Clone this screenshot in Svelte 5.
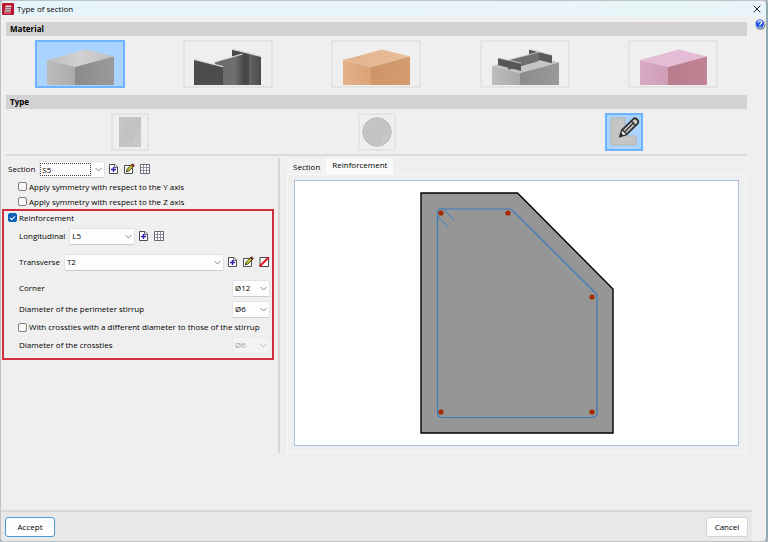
<script>
  const materials = ['Concrete', 'Steel', 'Timber', 'Composite', 'Generic'];
  const types = ['Rectangular', 'Circular', 'Custom'];

  let material = $state('Concrete');
  let type = $state('Custom');
  let tab = $state('Reinforcement');

  let section = $state('S5');
  let symmetryY = $state(false);
  let symmetryZ = $state(false);
  let reinforcement = $state(true);
  let longitudinal = $state('L5');
  let transverse = $state('T2');
  let corner = $state('Ø12');
  let perimeter = $state('Ø6');
  let crossties = $state(false);
  let crosstieDiameter = $state('Ø6');

  const diameters = ['Ø6', 'Ø8', 'Ø10', 'Ø12', 'Ø16'];
  const bars = [[146, 32], [213, 32], [297, 116], [146, 231], [297, 231]];
</script>

{#snippet chevron()}
  <svg class="chevron" width="9" height="6" viewBox="0 0 9 6" fill="none" stroke="#8a8a8a"><path d="M1.5 1l3 3 3-3" /></svg>
{/snippet}

{#snippet addIcon()}
  <button class="tool" aria-label="New">
    <svg width="10" height="12" viewBox="1 0 10 12">
      <path d="M1.5 1.5H7l2.500 2.500v6.500h-8z" fill="#fff" stroke="#4c4c4c" />
      <path d="M6.500 1.500v3h3" fill="#ddd" stroke="#4c4c4c" stroke-width=".8" />
      <path d="M5.500 4v5M3 6.500h5" stroke="#2a22b4" stroke-width="1.400" />
    </svg>
  </button>
{/snippet}

{#snippet editIcon()}
  <button class="tool" aria-label="Edit">
    <svg width="12" height="12" viewBox="0 0 12 12">
      <path d="M1.5 2.5h8v8h-8z" fill="#fff" stroke="#4c4c4c" />
      <path d="M3 5h3M3 7h2" stroke="#aaa" stroke-width=".7" />
      <path d="M3.4 8.8l.8-2.6 4.4-4.4 1.8 1.8L6 8z" fill="#c3c52b" stroke="#36360c" stroke-width=".8" />
      <path d="M8.3 2l1.4-1.4 1.8 1.8-1.4 1.4z" fill="#a0202c" stroke="#2e1212" stroke-width=".5" />
      <path d="M3.2 9l.4-1.4 1 1z" fill="#111" />
    </svg>
  </button>
{/snippet}

{#snippet tableIcon()}
  <button class="tool" aria-label="Table">
    <svg width="12" height="12" viewBox="0 0 12 12">
      <path d="M1.5 1.5h9v9h-9z" fill="#fff" stroke="#66666e" />
      <path d="M1.5 4.5h9M1.5 7.5h9M4.5 1.5v9M7.5 1.5v9" stroke="#77778a" stroke-width=".8" />
    </svg>
  </button>
{/snippet}

{#snippet helpIcon()}
  <svg width="12" height="12" viewBox="0 0 12 12">
    <circle cx="6.3" cy="6.5" r="5.2" fill="#777" />
    <circle cx="5.8" cy="5.8" r="5" fill="#dfe6f5" />
    <circle cx="5.8" cy="5.8" r="4.2" fill="#2454e0" />
    <path d="M4.1 4.6c0-2.2 3.6-2.2 3.6-.1 0 1.2-1.8 1.2-1.8 2.4M5.9 8v1.2" fill="none" stroke="#fff" stroke-width="1.3" />
  </svg>
{/snippet}

{#snippet block(left, top, right)}
  <path d="M10 18L49 7.5 77 14.5 38 25z" fill={top} />
  <path d="M10 18l28 7v18H10z" fill={left} />
  <path d="M38 25l39-10.5V43H38z" fill={right} />
{/snippet}

<div class="window">
  <header class="titlebar">
    <svg width="12" height="12" viewBox="0 0 12 12">
      <rect width="12" height="12" rx="1" fill="#b9152c" />
      <path d="M3.5 2.5h6l-1 6.5h-6z" fill="#f0dfe1" />
      <path d="M3.2 4.4h6M3 6.2h6M2.6 8h6" stroke="#713039" stroke-width=".8" />
      <path d="M2 10h7" stroke="#e9a8b0" stroke-width=".8" />
    </svg>
    <h1>Type of section</h1>
    <button class="close" aria-label="Close">
      <svg width="8" height="8" viewBox="0 0 8 8" stroke="#222" stroke-width="1"><path d="M.7.7l6.6 6.6M7.3.7L.7 7.3" /></svg>
    </button>
  </header>

  <div class="content">
    <main>
      <h2>Material</h2>
      <div class="tiles materials">
        {#each materials as name}
          <button class="tile" class:selected={material === name} aria-label={name} onclick={() => (material = name)}>
            <svg width="86" height="44" viewBox="0 0 86 44">
              {#if name === 'Concrete'}
                {@render block('url(#concreteLeft)', 'url(#concreteTop)', 'url(#concreteRight)')}
              {:else if name === 'Steel'}
                <path d="M47 7l29 7.3V43H47z" fill="#4a4a4a" />
                <path d="M30 20l28-8.5V43H30z" fill="url(#steelWeb)" />
                <path d="M58 11.500l6-1V43h-6z" fill="#484848" />
                <path d="M64 11.200l12 3.100V43H64z" fill="url(#steelFlange)" />
                <path d="M28 20.300L57.500 12M47 7.200l29 7.200" stroke="#dedede" stroke-width="1.200" fill="none" />
                <path d="M9 17.500l29 7.300V43H9z" fill="#4c4c4c" />
                <path d="M9 17.300l29 7.300" stroke="#d8d8d8" stroke-width="1.300" />
              {:else if name === 'Timber'}
                {@render block('url(#woodLeft)', 'url(#woodTop)', 'url(#woodRight)')}
                <path d="M40 31q16-1 37-8M40 37q18-1 37-6M12 29q12-4 24 2M12 37q12-3 24 1M20 17l36-7M30 20l38-8" fill="none" stroke="#b9703b" stroke-width=".5" opacity=".2" />
              {:else if name === 'Composite'}
                <path d="M10 24l39-11 28 7.500L38 31z" fill="#c6c6c6" />
                <path d="M10 24l28 7v12H10z" fill="url(#concreteLeft)" />
                <path d="M38 31l39-10.500V43H38z" fill="url(#concreteRight)" />
                <path d="M47 7.500l10 2.500v8l-10-2z" fill="#555" />
                <path d="M26 18l31-8v9l-31 9z" fill="#6f6f6f" />
                <path d="M57 10l13 3.200v8L57 18z" fill="#5b5b5b" />
                <path d="M16 16l23 5.500V29l-23-6z" fill="#575757" />
                <path d="M16 15.700l23 5.500M26 18l31-8M47 7.200l23 5.800" stroke="#d7d7d7" stroke-width=".8" />
              {:else}
                {@render block('url(#pinkLeft)', '#e4bcd6', 'url(#pinkRight)')}
              {/if}
            </svg>
          </button>
        {/each}
      </div>

      <h2>Type</h2>
      <div class="tiles types">
        {#each types as name}
          <button class="tile" class:selected={type === name} aria-label={name} onclick={() => (type = name)}>
            <svg width="34" height="34" viewBox="0 0 34 34">
              {#if name === 'Rectangular'}
                <rect x="6.5" y="2.5" width="21" height="29" fill="url(#concreteFace)" stroke="#c4c4c4" />
                <path d="M9 7q6 3 4 9M20 27q-3-7 5-14M11 17l4 3M17 5l1 4" fill="none" stroke="#b2b2b2" stroke-width=".5" />
              {:else if name === 'Circular'}
                <circle cx="17" cy="17" r="14.3" fill="url(#concreteFace)" stroke="#bcbcbc" />
                <path d="M10 8q6 3 4 8M21 28q-5-7 3-13M7 17l4 3M17 5l1 4" fill="none" stroke="#b2b2b2" stroke-width=".5" />
              {:else}
                <path d="M4 3h14v18h11v9H4z" fill="#c6c6c6" stroke="#b4b4b4" />
                <path d="M8 7l3 4M9 18l5 2M8 27l3-1M20 26l4 2" stroke="#b0b0b0" stroke-width=".5" />
                <path d="M13 21.500l2-6.500L26.500 3.800q1.500-1.300 3.600.7t.7 3.800L19.500 19.500z" fill="#c9c9c9" stroke="#333" stroke-width="1.800" />
                <path d="M24 6l5 5M17.500 17L27 7.500M15.300 14.800l4.400 4.600" stroke="#333" stroke-width="1.400" />
                <path d="M15.300 16l3.300 3.300-3.300 1.200-1-1z" fill="#eee" />
                <path d="M13 21.500l1-3.400 2.500 2.400z" fill="#222" />
              {/if}
            </svg>
          </button>
        {/each}
      </div>

      <div class="panels">
        <section class="form">
          <div class="row section-row">
            <label for="section">Section</label>
            <span class="combo medium focused">
              <select id="section" bind:value={section}><option>S5</option><option>S4</option></select>
              {@render chevron()}
            </span>
            {@render addIcon()}
            {@render editIcon()}
            {@render tableIcon()}
          </div>
          <label class="check outer"><input type="checkbox" bind:checked={symmetryY} />Apply symmetry with respect to the Y axis</label>
          <label class="check outer"><input type="checkbox" bind:checked={symmetryZ} />Apply symmetry with respect to the Z axis</label>

          <div class="group">
            <label class="check head"><input type="checkbox" bind:checked={reinforcement} />Reinforcement</label>
            <div class="row">
              <label for="longitudinal">Longitudinal</label>
              <span class="combo medium">
                <select id="longitudinal" bind:value={longitudinal}><option>L5</option><option>L4</option></select>
                {@render chevron()}
              </span>
              {@render addIcon()}
              {@render tableIcon()}
            </div>
            <div class="row spaced">
              <label for="transverse">Transverse</label>
              <span class="combo grow">
                <select id="transverse" bind:value={transverse}><option>T2</option><option>T1</option></select>
                {@render chevron()}
              </span>
              {@render addIcon()}
              {@render editIcon()}
              <button class="tool" aria-label="None">
                <svg width="12" height="12" viewBox="0 0 12 12">
                  <path d="M2 1.500h8.500v9H2z" fill="#fff" stroke="#444" />
                  <path d="M1.500 10.500L10.800 1.200" stroke="#e0202b" stroke-width="2.200" />
                </svg>
              </button>
            </div>
            <div class="row spaced">
              <label for="corner">Corner</label>
              <span class="combo small">
                <select id="corner" bind:value={corner}>{#each diameters as d}<option>{d}</option>{/each}</select>
                {@render chevron()}
              </span>
            </div>
            <div class="row close-row">
              <label for="perimeter">Diameter of the perimeter stirrup</label>
              <span class="combo small">
                <select id="perimeter" bind:value={perimeter}>{#each diameters as d}<option>{d}</option>{/each}</select>
                {@render chevron()}
              </span>
            </div>
            <label class="check inner"><input type="checkbox" bind:checked={crossties} />With crossties with a different diameter to those of the stirrup</label>
            <div class="row">
              <label for="crosstie">Diameter of the crossties</label>
              <span class="combo small" class:disabled={!crossties}>
                <select id="crosstie" bind:value={crosstieDiameter} disabled={!crossties}>{#each diameters as d}<option>{d}</option>{/each}</select>
                {@render chevron()}
              </span>
            </div>
          </div>
        </section>

        <section class="preview">
          <div class="tabs" role="tablist">
            {#each ['Section', 'Reinforcement'] as name}
              <button role="tab" class:active={tab === name} aria-selected={tab === name} onclick={() => (tab = name)}>{name}</button>
            {/each}
          </div>
          <div class="pane">
            <svg class="drawing" viewBox="0 0 443 264">
              <path d="M126 12h96.500l95.500 96v144H126z" fill="#969696" stroke="#000" stroke-width="1.400" />
              <g fill="none" stroke="#3a7cbc" stroke-width="1.200">
                <path d="M146.500 28H214q2 0 3.500 1.500l83 82.500q1.500 1.500 1.500 3.500V231.500q0 5-5 5H147q-4.500 0-4.500-5V32.500q0-4.500 4-4.500z" />
                <path d="M149 28.500L159.500 39.500M142.500 35L153 46" stroke-width="1" />
              </g>
              {#each bars as [x, y]}
                <circle cx={x} cy={y} r="2.600" fill="#a82800" />
              {/each}
            </svg>
          </div>
        </section>
      </div>
    </main>
    <aside>
      <button class="help" aria-label="Help">{@render helpIcon()}</button>
    </aside>
  </div>

  <footer>
    <button class="primary">Accept</button>
    <button>Cancel</button>
  </footer>
</div>

<!-- shared material fills -->
<svg class="defs" width="0" height="0" aria-hidden="true">
  <defs>
    <linearGradient id="concreteTop"><stop offset="0" stop-color="#bebebe" /><stop offset=".5" stop-color="#d2d2d2" /><stop offset="1" stop-color="#bdbdbd" /></linearGradient>
    <linearGradient id="concreteLeft"><stop offset="0" stop-color="#bdbdbd" /><stop offset="1" stop-color="#aaaaaa" /></linearGradient>
    <linearGradient id="concreteRight"><stop offset="0" stop-color="#8b8b8b" /><stop offset="1" stop-color="#9a9a9a" /></linearGradient>
    <linearGradient id="concreteFace" x2="1" y2="1"><stop offset="0" stop-color="#c9c9c9" /><stop offset=".5" stop-color="#c1c1c1" /><stop offset="1" stop-color="#cbcbcb" /></linearGradient>
    <linearGradient id="steelWeb"><stop offset="0" stop-color="#6a6a6a" /><stop offset=".7" stop-color="#6f6f6f" /><stop offset="1" stop-color="#4c4c4c" /></linearGradient>
    <linearGradient id="steelFlange"><stop offset="0" stop-color="#666" /><stop offset="1" stop-color="#4a4a4a" /></linearGradient>
    <linearGradient id="woodTop"><stop offset="0" stop-color="#e3b58e" /><stop offset="1" stop-color="#e9c09b" /></linearGradient>
    <linearGradient id="woodLeft"><stop offset="0" stop-color="#e3b18a" /><stop offset="1" stop-color="#dca378" /></linearGradient>
    <linearGradient id="woodRight"><stop offset="0" stop-color="#cf9568" /><stop offset="1" stop-color="#d49c6e" /></linearGradient>
    <linearGradient id="pinkLeft"><stop offset="0" stop-color="#d9aac3" /><stop offset="1" stop-color="#cf9db5" /></linearGradient>
    <linearGradient id="pinkRight"><stop offset="0" stop-color="#b87c8c" /><stop offset="1" stop-color="#c08495" /></linearGradient>
  </defs>
</svg>

<style>
  :global(body) {
    background: #b4b9bc;
  }

  .window {
    box-sizing: border-box;
    min-height: 100vh;
    display: flex;
    flex-direction: column;
    border: 1px solid #bfc1c2;
    border-right: 2px solid #92aab3;
    border-radius: 5px;
    background: #efefef;
    overflow: hidden;
    font-family: "Open Sans", "Noto Sans", sans-serif;
    font-size: 8px;
    line-height: 14px;
    color: #000;
  }

  button,
  select {
    font: inherit;
    color: inherit;
    padding: 0;
    margin: 0;
    border: none;
    background: none;
  }

  svg {
    display: block;
  }

  .defs {
    position: absolute;
  }

  .titlebar {
    display: flex;
    align-items: center;
    gap: 3px;
    height: 16px;
    padding: 0 4px 0 1px;
    background: linear-gradient(90deg, #e6f5fa, #e9f4fb 75%, #e6f6f5 85%, #e9f4fb);
  }

  h1 {
    flex: 1;
    margin: 0;
    font-size: 8px;
    font-weight: 400;
  }

  .close {
    padding: 1px;
  }

  .content {
    flex: 1;
    display: flex;
    padding-top: 5px;
  }

  main {
    flex: 1;
    min-width: 0;
    padding-left: 5px;
  }

  aside {
    width: 19px;
    display: flex;
    justify-content: flex-end;
    align-items: flex-start;
  }

  .help {
    margin-top: -4px;
  }

  h2 {
    margin: 0;
    padding-left: 4px;
    font-size: 8px;
    font-weight: 700;
    line-height: 14px;
    color: #000;
    background: #d2d2d2;
  }

  .tiles {
    display: grid;
    justify-items: center;
  }

  .materials {
    grid-template-columns: repeat(5, 1fr);
    padding: 4px 0 7px;
  }

  .types {
    grid-template-columns: repeat(3, 1fr);
    padding: 4px 0 3px;
    border-bottom: 2px solid #dadada;
  }

  .tile {
    border: 2px solid #e4e4e4;
    background: #efefef;
  }

  .tile.selected {
    border-color: #70b4ff;
    background: #aad3ff;
  }

  .panels {
    display: flex;
    margin-left: -4px;
    padding-top: 2px;
  }

  .form {
    width: 272px;
    flex-shrink: 0;
    padding-right: 4px;
    border-right: 2px solid #d6d6d6;
  }

  .row {
    display: flex;
    align-items: center;
    gap: 4px;
    height: 18px;
  }

  .section-row {
    padding: 2px 0 1px 6px;
  }

  .group {
    border: 2px solid #cf2f3f;
    padding: 0 2px 4px 4px;
  }

  .group .row {
    padding-left: 11px;
  }

  .row.spaced {
    margin-top: 8px;
  }

  .row.close-row {
    margin-top: 3px;
  }

  .row > label {
    white-space: nowrap;
  }

  .combo {
    position: relative;
    display: block;
    box-sizing: border-box;
    height: 17px;
    border: 1px solid #e2e2e2;
    border-bottom-color: #cccccc;
    border-radius: 2px;
    background: #fdfdfd;
  }

  .combo select {
    appearance: none;
    display: block;
    width: 100%;
    height: 15px;
    padding-left: 2px;
    line-height: 14px;
    outline: none;
  }

  .combo.focused select {
    width: 51px;
    border: 1px dotted #444;
    height: 13px;
    margin-top: 1px;
    line-height: 11px;
    padding-left: 1px;
  }

  .chevron {
    position: absolute;
    right: 1px;
    top: 5px;
    pointer-events: none;
  }

  .combo.medium {
    width: 66px;
  }

  .combo.small {
    width: 38px;
    margin-left: auto;
  }

  .combo.grow {
    flex: 1;
  }

  .combo.disabled {
    border-color: #ebebeb;
    background: #f3f3f3;
  }

  .combo.disabled select {
    color: #a3a3a3;
    opacity: 1;
  }

  .combo.disabled .chevron {
    opacity: 0.5;
  }

  .tool {
    flex-shrink: 0;
  }

  .check {
    display: flex;
    align-items: center;
    gap: 2px;
    height: 15px;
    white-space: nowrap;
  }

  .check.outer {
    padding-left: 16px;
  }

  .check.head {
    height: 13px;
    padding-bottom: 3px;
  }

  .check.inner {
    padding-left: 10px;
    height: 18px;
  }

  .check input {
    appearance: none;
    flex-shrink: 0;
    box-sizing: border-box;
    width: 9px;
    height: 9px;
    margin: 0;
    border: 1px solid #7f7f7f;
    border-radius: 2px;
    background: #f7f7f7;
    display: grid;
    place-items: center;
  }

  .check input:checked {
    border-color: #0a62b8;
    background: #0a62b8;
  }

  .check input:checked::after {
    content: '';
    width: 4px;
    height: 2px;
    border-left: 1px solid #fff;
    border-bottom: 1px solid #fff;
    transform: rotate(-45deg);
  }

  .preview {
    flex: 1;
    min-width: 0;
    padding: 0 1px 0 7px;
  }

  .tabs {
    display: flex;
    align-items: flex-end;
    height: 16px;
  }

  .tabs button {
    height: 15px;
    padding: 0 6px;
    background: #f2f2f2;
  }

  .tabs button.active {
    height: 16px;
    padding-bottom: 2px;
    background: #fafafa;
  }

  .pane {
    border: 1px solid #f8f8f8;
    padding: 5px 6px 6px;
  }

  .drawing {
    box-sizing: border-box;
    width: 100%;
    border: 1px solid #a9c0d8;
    background: #fff;
  }

  footer {
    display: flex;
    justify-content: space-between;
    align-items: center;
    box-sizing: border-box;
    height: 31px;
    margin-right: 14px;
    padding: 0 4px;
    border-top: 2px solid #d8d8d8;
    background: #e8e8e8;
  }

  footer button {
    box-sizing: border-box;
    min-width: 42px;
    height: 20px;
    border: 1px solid #d4d4d4;
    border-radius: 3px;
    background: #fdfdfd;
  }

  footer .primary {
    min-width: 50px;
    border-color: #4a98d3;
  }
</style>
